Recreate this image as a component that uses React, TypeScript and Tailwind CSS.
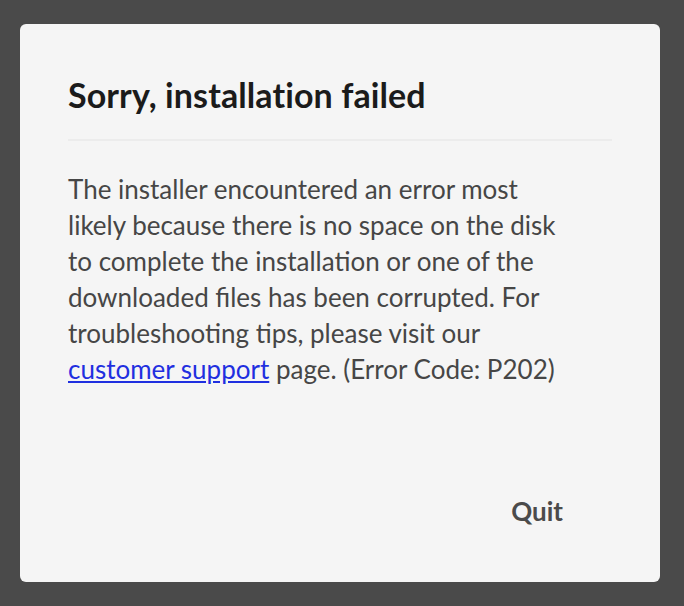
export default function App() {
  return (
    <div className="w-[684px] h-[606px] bg-[#4a4a4a] pt-[24px] pl-[20px] pr-[24px] pb-[24px] font-['Lato',sans-serif]">
      <div className="h-full bg-[#f5f5f5] rounded-[6px] pt-[51px] px-[48px] flex flex-col">
        <h1 className="text-[34px] leading-[40px] font-bold text-[#1b1b1b] tracking-[0.1px]">Sorry, installation failed</h1>
        <div className="mt-[24px] h-[2px] bg-[#ececec]" />
        <p className="mt-[30px] text-[26px] leading-[36px] text-[#464646] whitespace-nowrap">
          The installer encountered an error most
          <br />
          likely because there is no space on the disk
          <br />
          to complete the installation or one of the
          <br />
          downloaded files has been corrupted. For
          <br />
          troubleshooting tips, please visit our
          <br />
          <a href="#" className="text-[#1f2fe0] underline">customer support</a> page. (Error Code: P202)
        </p>
        <div className="mt-[106px] flex justify-end pr-[49px]">
          <button type="button" className="text-[26px] leading-[36px] font-bold text-[#4b4b4b]">Quit</button>
        </div>
      </div>
    </div>
  );
}
